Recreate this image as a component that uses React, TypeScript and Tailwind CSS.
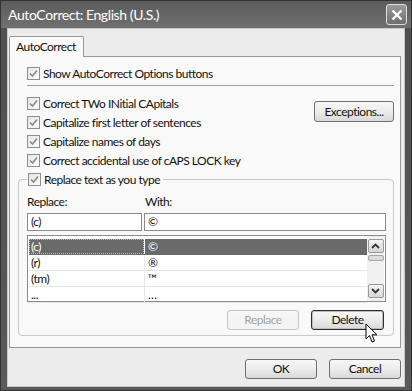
import React from 'react';

const font = { fontFamily: 'Lato, "Noto Sans", Arial, sans-serif' };

const Check = ({ label }: { label: string }) => (
  <div className="flex items-center h-[19px] gap-[3px]">
    <span className="w-[13px] h-[13px] border border-[#8e8e8e] bg-gradient-to-br from-[#e6e6e6] to-[#fdfdfd] flex items-center justify-center">
      <svg width="9" height="9" viewBox="0 0 9 9">
        <path d="M1 4.5 L3.5 7 L8 1.5" fill="none" stroke="#8a8a8a" strokeWidth="1.6" />
      </svg>
    </span>
    <span>{label}</span>
  </div>
);

const Btn = ({ label, w, variant }: { label: string; w: string; variant?: 'disabled' | 'focus' }) => (
  <button
    className={`h-[20px] ${w} rounded-[3px] border bg-gradient-to-b from-[#f7f7f7] via-[#ececec] to-[#d9d9d9] ${
      variant === 'disabled'
        ? 'border-[#c4c4c4] text-[#a3a3a3] from-[#f4f4f4] to-[#f4f4f4] via-[#f4f4f4]'
        : variant === 'focus'
        ? 'border-[#2e2e2e] text-[#111] shadow-[inset_0_0_0_1px_#bdbdbd]'
        : 'border-[#6f6f6f] text-[#111]'
    }`}
  >
    {label}
  </button>
);

const rows = [
  { a: '(c)', b: '©' },
  { a: '(r)', b: '®' },
  { a: '(tm)', b: '™' },
  { a: '...', b: '…' },
];

export default function App() {
  return (
    <div
      className="w-[412px] h-[391px] flex flex-col bg-gradient-to-b from-[#4e4e4e] to-[#5a5a5a] border border-[#333] text-[12px] tracking-[-0.5px] text-[#111]"
      style={font}
    >
      {/* title bar */}
      <div className="h-[28px] flex items-center justify-between pl-[7px] pr-[4px] bg-gradient-to-b from-[#5c5c5c] to-[#707070]">
        <span className="text-white text-[14px] tracking-[-0.4px]">AutoCorrect: English (U.S.)</span>
        <span className="w-[21px] h-[21px] rounded-[3px] border border-[#dcdcdc] bg-gradient-to-b from-[#9a9a9a] to-[#707070] flex items-center justify-center">
          <svg width="12" height="12" viewBox="0 0 12 12">
            <path d="M1.5 1.5 L10.5 10.5 M10.5 1.5 L1.5 10.5" stroke="white" strokeWidth="2.4" />
          </svg>
        </span>
      </div>

      {/* client area */}
      <div className="flex-1 mx-[6px] mb-[3px] bg-[#ececec] border border-[#c8c8c8] flex flex-col pl-[1px] pr-[3px] pt-[7px] pb-[7px]">
        {/* tab */}
        <div className="flex">
          <div className="h-[21px] w-[75px] -mb-px z-10 bg-[#fafafa] border border-b-0 border-[#979797] rounded-t-[2px] flex items-center pl-[6px]">
            AutoCorrect
          </div>
        </div>
        <div className="bg-[#f9f9f9] border border-[#979797] pl-[17px] pr-[6px] pt-[7px] pb-[11px]">
          <Check label="Show AutoCorrect Options buttons" />
          <div className="h-px bg-[#a0a0a0] mt-[2px] mb-[8px]" />
          <div className="flex justify-between">
            <div className="flex flex-col">
              <Check label="Correct TWo INitial CApitals" />
              <Check label="Capitalize first letter of sentences" />
              <Check label="Capitalize names of days" />
              <Check label="Correct accidental use of cAPS LOCK key" />
            </div>
            <div className="pt-[7px]">
              <button className="h-[21px] w-[80px] rounded-[3px] border border-[#6f6f6f] bg-gradient-to-b from-[#f7f7f7] via-[#ececec] to-[#d9d9d9]">
                Exceptions...
              </button>
            </div>
          </div>

          {/* group box */}
          <fieldset className="-ml-[9px] border border-[#c9c9c9] rounded-[4px] pl-[8px] pr-[7px] pb-[5px]">
            <legend className="pl-[1px] pr-[3px] bg-[#f9f9f9]">
              <Check label="Replace text as you type" />
            </legend>
            <div className="flex mt-[4px] h-[18px] items-center">
              <span className="w-[118px]">Replace:</span>
              <span>With:</span>
            </div>
            <div className="flex gap-[2px] mt-[2px]">
              <div className="w-[115px] h-[18px] border border-[#8c8c8c] bg-white flex items-center pl-[3px]">(c)</div>
              <div className="flex-1 h-[18px] border border-[#8c8c8c] bg-white flex items-center pl-[3px]">©</div>
            </div>
            <div className="mt-[4px] h-[67px] border border-[#8c8c8c] bg-white flex">
              <div className="flex-1 flex flex-col pt-[3px] pl-px">
                {rows.map((r, i) => (
                  <div
                    key={r.a}
                    className={`flex h-[16px] items-center border-b ${
                      i === 0 ? 'bg-[#6a6a6a] text-white border-[#6a6a6a]' : 'border-[#e6e6e6]'
                    }`}
                  >
                    <span
                      className={`w-[115px] h-full flex items-center pl-[2px] ${
                        i === 0 ? 'outline-1 outline-dotted outline-[#bbb] -outline-offset-1' : ''
                      }`}
                    >
                      {r.a}
                    </span>
                    <span className={`flex-1 h-full flex items-center pl-[3px] border-l ${i === 0 ? 'border-white' : 'border-[#e6e6e6]'}`}>
                      {r.b}
                    </span>
                  </div>
                ))}
              </div>
              {/* scrollbar */}
              <div className="w-[17px] mr-px flex flex-col items-center bg-[#f1f1f1] py-[3px]">
                <div className="w-[16px] h-[14px] border border-[#9a9a9a] rounded-[2px] bg-gradient-to-b from-[#f4f4f4] to-[#d6d6d6] flex items-center justify-center">
                  <svg width="9" height="6" viewBox="0 0 9 6">
                    <path d="M1 5 L4.5 1.5 L8 5" fill="none" stroke="#333" strokeWidth="1.8" />
                  </svg>
                </div>
                <div className="w-[16px] h-[6px] mt-[2px] border border-[#a5a5a5] rounded-[2px] bg-[#dcdcdc]" />
                <div className="flex-1" />
                <div className="w-[16px] h-[14px] border border-[#9a9a9a] rounded-[2px] bg-gradient-to-b from-[#f4f4f4] to-[#d6d6d6] flex items-center justify-center">
                  <svg width="9" height="6" viewBox="0 0 9 6">
                    <path d="M1 1 L4.5 4.5 L8 1" fill="none" stroke="#333" strokeWidth="1.8" />
                  </svg>
                </div>
              </div>
            </div>
            <div className="flex justify-end gap-[12px] mt-[8px] mr-[2px] relative">
              <Btn label="Replace" w="w-[72px]" variant="disabled" />
              <Btn label="Delete" w="w-[73px]" variant="focus" />
              {/* mouse pointer */}
              <svg className="absolute right-[6px] top-[13px]" width="13" height="21" viewBox="0 0 13 21">
                <path
                  d="M1 1 L1 16 L4.5 12.5 L7 19 L9.5 18 L7 11.8 L12 11.8 Z"
                  fill="white"
                  stroke="black"
                  strokeWidth="1"
                  strokeLinejoin="round"
                />
              </svg>
            </div>
          </fieldset>
        </div>

        {/* dialog buttons */}
        <div className="flex justify-end gap-[12px] mt-[11px]">
          <Btn label="OK" w="w-[72px]" />
          <Btn label="Cancel" w="w-[72px]" />
        </div>
      </div>
    </div>
  );
}
